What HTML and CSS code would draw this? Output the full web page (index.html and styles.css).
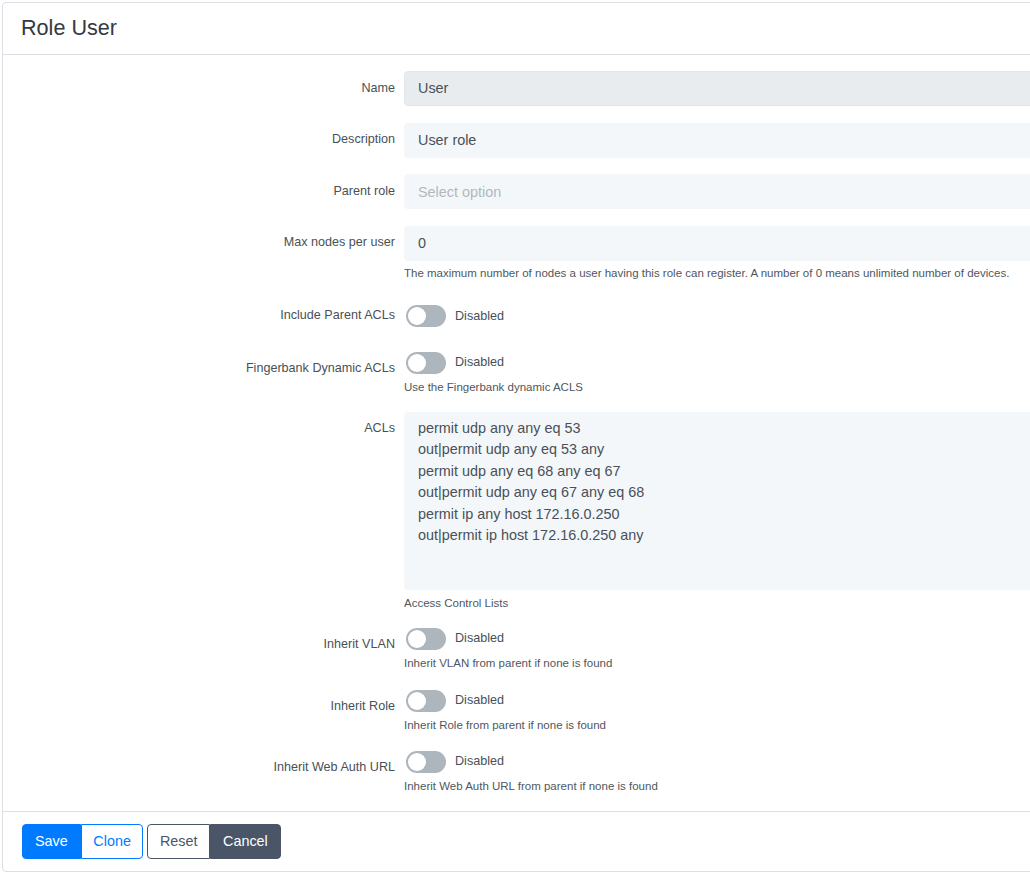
FILE: index.html
```html
<!DOCTYPE html>
<html lang="en">
<head>
    <meta charset="UTF-8">
    <meta name="viewport" content="width=device-width, initial-scale=1.0">
    <title>Role User</title>
    <link rel="stylesheet" href="styles.css">
</head>
<body>
    <div class="card">
        <div class="card-header">
            <h4>Role User</h4>
        </div>

        <div class="card-body">
            <div class="form-row">
                <label class="col-label">Name</label>
                <div class="col-input">
                    <input type="text" class="form-control readonly" value="User" readonly>
                </div>
            </div>

            <div class="form-row">
                <label class="col-label">Description</label>
                <div class="col-input">
                    <input type="text" class="form-control" value="User role">
                </div>
            </div>

            <div class="form-row">
                <label class="col-label">Parent role</label>
                <div class="col-input">
                    <input type="text" class="form-control" placeholder="Select option">
                </div>
            </div>

            <div class="form-row row-help">
                <label class="col-label">Max nodes per user</label>
                <div class="col-input">
                    <input type="text" class="form-control" value="0">
                    <small class="help">The maximum number of nodes a user having this role can register. A number of 0 means unlimited number of devices.</small>
                </div>
            </div>

            <div class="form-row row-toggle-only">
                <label class="col-label">Include Parent ACLs</label>
                <div class="col-input toggle-line">
                    <span class="toggle"><span class="knob"></span></span>
                    <span class="toggle-text">Disabled</span>
                </div>
            </div>

            <div class="form-row row-toggle">
                <label class="col-label">Fingerbank Dynamic ACLs</label>
                <div class="col-input">
                    <div class="toggle-line">
                        <span class="toggle"><span class="knob"></span></span>
                        <span class="toggle-text">Disabled</span>
                    </div>
                    <small class="help">Use the Fingerbank dynamic ACLS</small>
                </div>
            </div>

            <div class="form-row row-acl">
                <label class="col-label">ACLs</label>
                <div class="col-input">
                    <textarea class="form-control acl-box">permit udp any any eq 53
out|permit udp any eq 53 any
permit udp any eq 68 any eq 67
out|permit udp any eq 67 any eq 68
permit ip any host 172.16.0.250
out|permit ip host 172.16.0.250 any</textarea>
                    <small class="help">Access Control Lists</small>
                </div>
            </div>

            <div class="form-row row-toggle vlan">
                <label class="col-label">Inherit VLAN</label>
                <div class="col-input">
                    <div class="toggle-line">
                        <span class="toggle"><span class="knob"></span></span>
                        <span class="toggle-text">Disabled</span>
                    </div>
                    <small class="help">Inherit VLAN from parent if none is found</small>
                </div>
            </div>

            <div class="form-row row-toggle">
                <label class="col-label">Inherit Role</label>
                <div class="col-input">
                    <div class="toggle-line">
                        <span class="toggle"><span class="knob"></span></span>
                        <span class="toggle-text">Disabled</span>
                    </div>
                    <small class="help">Inherit Role from parent if none is found</small>
                </div>
            </div>

            <div class="form-row row-toggle last">
                <label class="col-label">Inherit Web Auth URL</label>
                <div class="col-input">
                    <div class="toggle-line">
                        <span class="toggle"><span class="knob"></span></span>
                        <span class="toggle-text">Disabled</span>
                    </div>
                    <small class="help">Inherit Web Auth URL from parent if none is found</small>
                </div>
            </div>
        </div>

        <div class="card-footer">
            <div class="btn-group">
                <button class="btn btn-primary">Save</button>
                <button class="btn btn-outline-primary">Clone</button>
            </div>
            <div class="btn-group">
                <button class="btn btn-outline-secondary">Reset</button>
                <button class="btn btn-secondary">Cancel</button>
            </div>
        </div>
    </div>
</body>
</html>
```

FILE: styles.css
```css
* {
    margin: 0;
    padding: 0;
    box-sizing: border-box;
    font-family: "Liberation Sans", Arial, sans-serif;
}

html, body {
    overflow: hidden;
}

body {
    background: #ffffff;
    padding: 2px 0 0 2px;
    color: #495057;
}

.card {
    width: 1200px;
    border: 1px solid #dcdfe3;
    border-radius: 4px;
    background: #ffffff;
}

.card-header {
    height: 52px;
    padding: 0 18px 2px;
    display: flex;
    align-items: center;
    border-bottom: 1px solid #dcdfe3;
}

.card-header h4 {
    font-size: 21.6px;
    font-weight: 400;
    color: #343a40;
}

.card-body {
    padding: 16px 0 17.5px;
}

.form-row {
    display: grid;
    grid-template-columns: 392px 1fr;
    column-gap: 9px;
    margin-bottom: 16.5px;
}

.col-label {
    font-size: 12.6px;
    line-height: 18px;
    padding-top: 7.5px;
    text-align: right;
    color: #495057;
}

.form-control {
    display: block;
    width: 100%;
    height: 35px;
    border: 1px solid transparent;
    border-radius: 4px;
    background: #f4f7fa;
    padding: 0 13px;
    font-size: 14.4px;
    color: #495057;
    outline: none;
}

.form-control::placeholder {
    color: #b1b7bd;
}

.form-control.readonly {
    background: #e9ecef;
    border-color: #e4e7ea;
    padding-bottom: 2px;
}

.help {
    display: block;
    font-size: 11.5px;
    line-height: 16px;
    margin-top: 4px;
    color: #50575e;
}

.row-help {
    margin-bottom: 18px;
}

/* toggles */
.toggle-line {
    display: flex;
    align-items: center;
    height: 22px;
    padding-left: 2px;
}

.row-toggle-only {
    margin-bottom: 18px;
}

.row-toggle-only .toggle-line {
    height: 35px;
}

.row-toggle .col-label {
    padding-top: 7.5px;
}

.row-acl .col-label {
    padding-top: 6.5px;
}

.row-toggle .help {
    margin-top: 5px;
}

.row-toggle {
    margin-bottom: 18px;
}

.row-toggle.vlan {
    margin-bottom: 19px;
}

.row-toggle.last {
    margin-bottom: 0;
}

.toggle {
    position: relative;
    display: inline-block;
    width: 40px;
    height: 22px;
    border-radius: 11px;
    background: #adb5bd;
}

.knob {
    position: absolute;
    left: 2px;
    top: 2px;
    width: 18px;
    height: 18px;
    border-radius: 50%;
    background: #ffffff;
}

.toggle-text {
    font-size: 12.6px;
    margin-left: 9px;
    margin-top: -2px;
    color: #495057;
}

.row-toggle-only .toggle-text {
    margin-top: -1px;
}

.row-acl {
    margin-bottom: 17px;
}

.acl-box {
    height: 178px;
    padding: 5px 13px;
    line-height: 21.6px;
    resize: none;
    margin-top: -1px;
}

.row-acl .help {
    margin-top: 5px;
}

/* footer */
.card-footer {
    border-top: 1px solid #dcdfe3;
    padding: 12px 19px;
    display: flex;
    gap: 4px;
}

.btn-group {
    display: flex;
}

.btn {
    height: 35px;
    padding: 0 12px 2px;
    font-size: 14.4px;
    border: 1px solid transparent;
    background: #ffffff;
    cursor: pointer;
}

.btn-group .btn:first-child {
    border-radius: 4px 0 0 4px;
}

.btn-group .btn:last-child {
    border-radius: 0 4px 4px 0;
}

.btn-primary {
    background: #007bff;
    border-color: #007bff;
    color: #ffffff;
}

.btn-outline-primary {
    border-color: #007bff;
    color: #007bff;
    padding: 0 11.5px 2px;
}

.btn-outline-secondary {
    border-color: #4a5568;
    color: #4a5568;
    padding: 0 11.5px 2px;
}

.btn-secondary {
    background: #4a5568;
    border-color: #4a5568;
    color: #ffffff;
}
```
